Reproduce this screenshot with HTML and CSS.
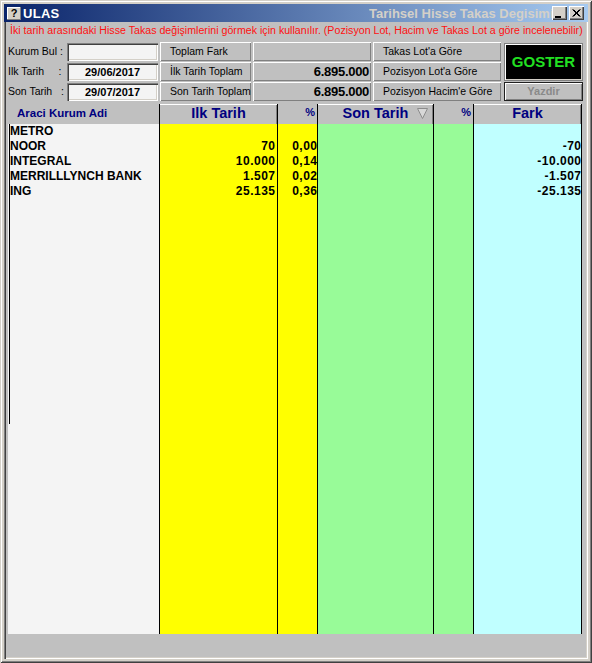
FILE: index.html
```html
<!DOCTYPE html>
<html>
<head>
<meta charset="utf-8">
<link rel="stylesheet" href="styles.css">
</head>
<body>
<div class="window">
  <div class="titlebar">
    <span class="ticon">?</span>
    <span class="tname">ULAS</span>
    <span class="tcaption">Tarihsel Hisse Takas Degisimi</span>
    <span class="tbtn tmin"><svg width="8" height="8" viewBox="0 0 8 8"><rect x="0" y="6" width="6" height="2" fill="#000"/></svg></span>
    <span class="tbtn tclose"><svg width="9" height="8" viewBox="0 0 9 8"><path d="M0.5 0.5 L7.5 7.5 M1.5 0.5 L8.5 7.5 M7.5 0.5 L0.5 7.5 M8.5 0.5 L1.5 7.5" stroke="#000" stroke-width="1"/></svg></span>
  </div>
  <div class="content">
    <div class="msg">İki tarih arasındaki Hisse Takas değişimlerini görmek için kullanılır. (Pozisyon Lot, Hacim ve Takas Lot a göre incelenebilir)</div>
    <div class="controls">
      <div class="lbl">Kurum Bul :</div>
      <div class="inp"></div>
      <div class="btn">Toplam Fark</div>
      <div class="val"></div>
      <div class="btn">Takas Lot'a Göre</div>
      <div class="goster">GOSTER</div>

      <div class="lbl">Ilk Tarih&nbsp;&nbsp;&nbsp;&nbsp;&nbsp;:</div>
      <div class="inp date">29/06/2017</div>
      <div class="btn">İlk Tarih Toplam</div>
      <div class="val">6.895.000</div>
      <div class="btn">Pozisyon Lot'a Göre</div>

      <div class="lbl">Son Tarih&nbsp;&nbsp;&nbsp;:</div>
      <div class="inp date">29/07/2017</div>
      <div class="btn">Son Tarih Toplam</div>
      <div class="val">6.895.000</div>
      <div class="btn">Pozisyon Hacim'e Göre</div>
      <div class="yazdir">Yazdir</div>
    </div>
    <div class="grid">
      <div class="col c-name">
        <div class="hd hd-name">Araci Kurum Adi</div>
        <div class="bd bd-name">
          <div class="vline"></div>
          <div class="rows">
            <div class="row">METRO</div>
            <div class="row">NOOR</div>
            <div class="row">INTEGRAL</div>
            <div class="row">MERRILLLYNCH BANK</div>
            <div class="row">ING</div>
          </div>
        </div>
      </div>
      <div class="col c-ilk">
        <div class="hd hd-btn">Ilk Tarih</div>
        <div class="bd num yellow pr3">
          <div class="row"></div>
          <div class="row">70</div>
          <div class="row">10.000</div>
          <div class="row">1.507</div>
          <div class="row">25.135</div>
        </div>
      </div>
      <div class="col c-pct">
        <div class="hd hd-pct">%</div>
        <div class="bd num yellow">
          <div class="row"></div>
          <div class="row">0,00</div>
          <div class="row">0,14</div>
          <div class="row">0,02</div>
          <div class="row">0,36</div>
        </div>
      </div>
      <div class="col c-son">
        <div class="hd hd-btn">Son Tarih<svg class="sorttri" width="11" height="11" viewBox="0 0 11 11"><polygon points="0.5,0.5 10.5,0.5 5.5,10.5" fill="#d8d8d8" stroke="#8c8c8c" stroke-width="1"/></svg></div>
        <div class="bd green"></div>
      </div>
      <div class="col c-pct">
        <div class="hd hd-pct">%</div>
        <div class="bd green"></div>
      </div>
      <div class="col c-fark">
        <div class="hd hd-btn">Fark</div>
        <div class="bd num cyan">
          <div class="row"></div>
          <div class="row">-70</div>
          <div class="row">-10.000</div>
          <div class="row">-1.507</div>
          <div class="row">-25.135</div>
        </div>
      </div>
    </div>
  </div>
</div>
</body>
</html>
```
FILE: styles.css
```css
* { box-sizing: border-box; }
html, body { margin: 0; padding: 0; }
body {
  width: 592px;
  height: 663px;
  overflow: hidden;
  background: #d4d0c8;
  font-family: "Liberation Sans", Arial, sans-serif;
}
.window {
  width: 592px;
  height: 663px;
  padding: 4px;
  background: #d4d0c8;
  box-shadow: inset 1px 1px #d4d0c8, inset -1px -1px #404040, inset 2px 2px #ffffff, inset -2px -2px #808080;
  display: flex;
  flex-direction: column;
}
.titlebar {
  height: 18px;
  flex: none;
  display: flex;
  align-items: center;
  padding: 0 4px 0 3px;
  background: linear-gradient(to right, #0a246a, #a6caf0);
}
.ticon {
  width: 14px;
  height: 13px;
  background: #d4d0c8;
  box-shadow: inset -1px -1px #808080, inset 1px 1px #ffffff;
  color: #000;
  font-weight: bold;
  font-size: 11px;
  line-height: 13px;
  text-align: center;
}
.tname {
  margin-left: 2px;
  color: #ffffff;
  font-weight: bold;
  font-size: 13px;
  letter-spacing: 0.3px;
}
.tcaption {
  margin-left: auto;
  width: 183px;
  overflow: hidden;
  white-space: nowrap;
  color: #d4d0c8;
  font-weight: bold;
  font-size: 13px;
}
.tbtn {
  width: 15px;
  height: 14px;
  background: #d4d0c8;
  box-shadow: inset 1px 1px #ffffff, inset -1px -1px #404040, inset -2px -2px #808080;
  display: flex;
  align-items: center;
  justify-content: center;
}
.tmin svg { margin-top: 2px; margin-left: -1px; }
.tclose { margin-left: 2px; }
.content {
  flex: 1;
  background: #c0c0c0;
  padding-left: 4px;
  box-shadow: inset 1px 0 #808080, inset 2px 0 #404040, inset -1px -1px #ffffff, inset -2px -2px #d4d0c8;
}
.msg {
  height: 20px;
  line-height: 16px;
  padding-left: 2px;
  color: #ff1010;
  font-size: 10.65px;
  white-space: nowrap;
  overflow: hidden;
}
.controls {
  display: grid;
  grid-template-columns: 57px 91px 91px 118px 128px 80px;
  grid-template-rows: 19px 19px 19px;
  column-gap: 2px;
  row-gap: 1px;
  font-size: 10.5px;
}
.lbl {
  line-height: 19px;
  white-space: nowrap;
  color: #000;
}
.inp {
  margin: 1px 0 0 0;
  background: #f4f4f4;
  box-shadow: inset 1px 1px #808080, inset 2px 2px #404040, inset -1px -1px #ffffff, inset -2px -2px #d4d0c8;
}
.date {
  text-align: center;
  font-weight: bold;
  font-size: 11px;
  line-height: 18px;
  color: #000;
}
.btn {
  background: #c0c0c0;
  box-shadow: inset 1px 1px #ffffff, inset -1px -1px #808080;
  padding-left: 10px;
  line-height: 19px;
  white-space: nowrap;
  overflow: hidden;
  color: #000;
}
.val {
  background: #c0c0c0;
  box-shadow: inset 1px 1px #ffffff, inset -1px -1px #808080;
  text-align: right;
  padding-right: 2px;
  font-weight: bold;
  font-size: 13px;
  letter-spacing: -0.3px;
  line-height: 19px;
  color: #000;
}
.goster {
  grid-column: 6;
  grid-row: 1 / span 2;
  margin: 1px 0 0 1px;
  background: #000;
  border: 1px solid #808080;
  box-shadow: inset 1px 1px #ffffff, inset -1px -1px #d4d0c8;
  color: #22e022;
  font-weight: bold;
  font-size: 15px;
  display: flex;
  align-items: center;
  justify-content: center;
  padding-bottom: 2px;
}
.yazdir {
  grid-column: 6;
  grid-row: 3;
  margin-left: 1px;
  border: 1px solid #202020;
  background: #c0c0c0;
  box-shadow: inset 1px 1px #ffffff, inset -1px -1px #808080;
  color: #8a8a8a;
  font-weight: bold;
  font-size: 11px;
  text-align: center;
  line-height: 17px;
}
.grid {
  margin-top: 3px;
  height: 530px;
  width: 574px;
  display: flex;
}
.col {
  display: flex;
  flex-direction: column;
  flex: none;
}
.c-name { width: 151px; }
.c-ilk { width: 118px; border-left: 1px solid #000; }
.c-pct { width: 40px; border-left: 1px solid #000; }
.c-son { width: 116px; border-left: 1px solid #000; }
.c-fark { width: 109px; border-left: 1px solid #000; border-right: 1px solid #000; }
.hd {
  height: 20px;
  flex: none;
  background: #c0c0c0;
  color: #000080;
  font-weight: bold;
  white-space: nowrap;
}
.hd-name {
  padding-left: 9px;
  font-size: 11.5px;
  line-height: 18px;
}
.hd-btn {
  box-shadow: inset 0 1px #ffffff, inset -1px 0 #808080;
  text-align: center;
  font-size: 14.5px;
  line-height: 19px;
}
.hd-pct {
  text-align: right;
  padding-right: 2px;
  font-size: 11px;
  line-height: 17px;
}
.sorttri {
  margin-left: 9px;
  margin-right: -20px;
  vertical-align: -1px;
}
.bd {
  flex: 1;
  font-size: 12px;
  font-weight: bold;
  color: #000;
}
.bd-name {
  background: #f4f4f4;
  display: flex;
  align-items: flex-start;
}
.vline {
  width: 1px;
  height: 300px;
  margin-left: 1px;
  margin-right: 0;
  background: #000;
  flex: none;
}
.rows { flex: 1; }
.row {
  height: 15px;
  line-height: 15px;
  white-space: nowrap;
}
.num { text-align: right; letter-spacing: 0.5px; }
.num .row { margin-right: -0.5px; }
.pr3 { padding-right: 2px; }
.yellow { background: #ffff00; }
.green { background: #98fb98; }
.cyan { background: #c0ffff; }
```
